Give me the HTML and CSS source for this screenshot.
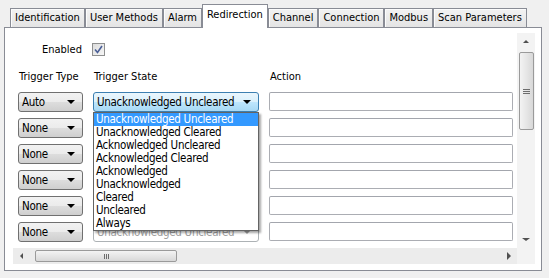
FILE: index.html
```html
<!DOCTYPE html>
<html lang="en">
<head>
  <meta charset="UTF-8" />
  <title>Redirection</title>
  <link rel="stylesheet" href="styles.css">
</head>
<body>
  <div class="tabs">
    <div class="tab">Identification</div>
    <div class="tab">User Methods</div>
    <div class="tab">Alarm</div>
    <div class="tab active">Redirection</div>
    <div class="tab">Channel</div>
    <div class="tab">Connection</div>
    <div class="tab">Modbus</div>
    <div class="tab">Scan Parameters</div>
  </div>

  <div class="panel">
    <div class="scroller">
      <div class="content">
        <div class="enabled-row">
          <span class="enabled-label">Enabled</span>
          <span class="checkbox">
            <svg width="9" height="9" viewBox="0 0 9 9"><path d="M1 4.5 L3.5 7.5 L8 1" fill="none" stroke="#4a5f97" stroke-width="1.6"/></svg>
          </span>
        </div>

        <div class="grid">
          <div class="head">Trigger Type</div>
          <div class="head">Trigger State</div>
          <div class="head">Action</div>

          <div class="combo">Auto<i class="arrow"></i></div>
          <div class="state-cell">
            <div class="combo focused">Unacknowledged Uncleared<i class="arrow"></i></div>
            <ul class="dropdown">
              <li class="selected">Unacknowledged Uncleared</li>
              <li>Unacknowledged Cleared</li>
              <li>Acknowledged Uncleared</li>
              <li>Acknowledged Cleared</li>
              <li>Acknowledged</li>
              <li>Unacknowledged</li>
              <li>Cleared</li>
              <li>Uncleared</li>
              <li>Always</li>
            </ul>
          </div>
          <div class="textbox"></div>

          <div class="combo">None<i class="arrow"></i></div>
          <div class="combo disabled"><i class="arrow"></i></div>
          <div class="textbox"></div>

          <div class="combo">None<i class="arrow"></i></div>
          <div class="combo disabled"><i class="arrow"></i></div>
          <div class="textbox"></div>

          <div class="combo">None<i class="arrow"></i></div>
          <div class="combo disabled"><i class="arrow"></i></div>
          <div class="textbox"></div>

          <div class="combo">None<i class="arrow"></i></div>
          <div class="combo disabled"><i class="arrow"></i></div>
          <div class="textbox"></div>

          <div class="combo">None<i class="arrow"></i></div>
          <div class="combo disabled">Unacknowledged Uncleared<i class="arrow"></i></div>
          <div class="textbox"></div>
        </div>
      </div>

      <div class="vscroll">
        <div class="sb-btn"><i class="tri up"></i></div>
        <div class="vtrack">
          <div class="vthumb"><span class="grip-h"></span></div>
        </div>
        <div class="sb-btn"><i class="tri down"></i></div>
      </div>

      <div class="hscroll">
        <div class="sb-btn"><i class="tri left"></i></div>
        <div class="htrack">
          <div class="hthumb"><span class="grip-v"></span></div>
        </div>
        <div class="sb-btn"><i class="tri right"></i></div>
      </div>

      <div class="corner"></div>
    </div>
  </div>
</body>
</html>
```

FILE: styles.css
```css
body {
  margin: 0;
  background: #f0f0f0;
  font-family: 'DejaVu Sans Condensed', 'DejaVu Sans', sans-serif;
  font-size: 11px;
  color: #000;
  width: 549px;
  height: 278px;
  overflow: hidden;
}

.tabs {
  display: flex;
  align-items: flex-end;
  height: 27px;
  padding-left: 10px;
  position: relative;
  z-index: 2;
}

.tab {
  height: 18px;
  line-height: 18px;
  padding: 0 4px;
  border: 1px solid #898c95;
  border-bottom: none;
  background: linear-gradient(#f2f2f2, #e4e4e4);
  box-shadow: inset 1px 1px 0 #fcfcfc;
  white-space: nowrap;
}

.tab.active {
  height: 23px;
  line-height: 20px;
  padding: 0 4px;
  background: #fff;
  box-shadow: none;
  margin-bottom: -1px;
}

.panel {
  margin: 0 7px 0 4px;
  height: 244px;
  border: 1px solid #898c95;
  background: #fff;
  box-sizing: border-box;
  padding: 5px 6px 7px 8px;
}

.scroller {
  display: grid;
  grid-template-columns: 504px 18px;
  grid-template-rows: 215px 16px;
  height: 100%;
}

.content {
  position: relative;
  padding: 10px 0 0 5px;
  overflow: visible;
}

.enabled-row {
  display: flex;
  align-items: center;
  gap: 10px;
  height: 13px;
}

.enabled-label {
  width: 64px;
  text-align: right;
}

.checkbox {
  width: 11px;
  height: 11px;
  border: 1px solid #8e8f8f;
  background: linear-gradient(135deg, #dcdcdc, #f6f6f6);
  display: flex;
  align-items: center;
  justify-content: center;
}

.grid {
  display: grid;
  grid-template-columns: 65px 166px 244px;
  column-gap: 10px;
  row-gap: 6px;
  margin-top: 14px;
}

.head {
  line-height: 13px;
  padding-left: 1px;
  margin-bottom: 3px;
}

.combo {
  position: relative;
  height: 20px;
  box-sizing: border-box;
  border: 1px solid #707070;
  border-radius: 3px;
  background: linear-gradient(#f2f2f2 0%, #ebebeb 50%, #dddddd 51%, #cfcfcf 100%);
  font-size: 11.5px;
  letter-spacing: -0.3px;
  line-height: 18px;
  padding-left: 3px;
  white-space: nowrap;
  overflow: hidden;
}

.combo .arrow {
  position: absolute;
  right: 7px;
  top: 7px;
  border-left: 4px solid transparent;
  border-right: 4px solid transparent;
  border-top: 4px solid #000;
}

.combo.focused {
  border-color: #3c7fb1;
  background: linear-gradient(#eaf6fd 0%, #d9f0fc 50%, #bee6fd 51%, #a7d9f5 100%);
}

.combo.disabled {
  border-color: #adb2b5;
  background: #fff;
  color: #a0a0a0;
}

.combo.disabled .arrow {
  border-top-color: #a0a0a0;
}

.state-cell {
  position: relative;
}

.dropdown {
  position: absolute;
  top: 20px;
  left: 0;
  width: 166px;
  box-sizing: border-box;
  margin: 0;
  padding: 0;
  list-style: none;
  background: #fff;
  border: 1px solid #646464;
  box-shadow: 2px 2px 2px rgba(0, 0, 0, 0.35);
  font-size: 11.5px;
  letter-spacing: -0.3px;
  z-index: 5;
}

.dropdown li {
  height: 13px;
  line-height: 13px;
  padding-left: 2px;
  white-space: nowrap;
}

.dropdown li.selected {
  background: #3399ff;
  color: #fff;
}

.textbox {
  height: 19px;
  box-sizing: border-box;
  border: 1px solid #abadb3;
  border-top-color: #a3a6ad;
  border-radius: 2px;
  background: #fff;
}

.vscroll {
  display: flex;
  flex-direction: column;
  background: #f3f3f3;
}

.hscroll {
  display: flex;
  background: #ececec;
}

.corner {
  background: #f3f3f3;
}

.sb-btn {
  flex: 0 0 17px;
  display: flex;
  align-items: center;
  justify-content: center;
}

.vtrack {
  flex: 1;
  padding: 2px 1px 0 2px;
}

.vthumb {
  height: 78px;
  box-sizing: border-box;
  border: 1px solid #9a9a9a;
  border-radius: 2px;
  background: linear-gradient(90deg, #f3f3f3, #e6e6e6 50%, #d8d8d8);
  display: flex;
  align-items: center;
  justify-content: center;
}

.htrack {
  flex: 1;
  padding: 2px 0 2px 5px;
}

.hthumb {
  width: 142px;
  height: 12px;
  box-sizing: border-box;
  border: 1px solid #9a9a9a;
  border-radius: 2px;
  background: linear-gradient(#f3f3f3, #e6e6e6 50%, #d8d8d8);
  display: flex;
  align-items: center;
  justify-content: center;
}

.grip-h {
  width: 7px;
  height: 5px;
  background: repeating-linear-gradient(#6d6d6d 0 1px, transparent 1px 2px);
}

.grip-v {
  width: 5px;
  height: 5px;
  background: repeating-linear-gradient(90deg, #6d6d6d 0 1px, transparent 1px 2px);
}

.tri {
  width: 0;
  height: 0;
}

.tri.up {
  border-left: 3px solid transparent;
  border-right: 3px solid transparent;
  border-bottom: 3px solid #505050;
}

.tri.down {
  border-left: 4px solid transparent;
  border-right: 4px solid transparent;
  border-top: 3px solid #505050;
}

.tri.left {
  border-top: 3px solid transparent;
  border-bottom: 3px solid transparent;
  border-right: 3px solid #505050;
}

.tri.right {
  border-top: 4px solid transparent;
  border-bottom: 4px solid transparent;
  border-left: 4px solid #505050;
}
```
